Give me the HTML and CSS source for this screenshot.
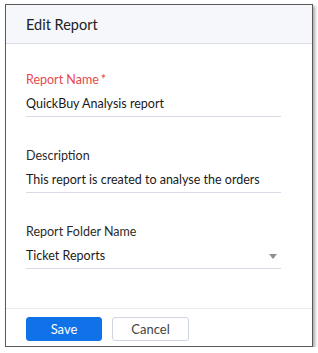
FILE: index.html
```html
<!DOCTYPE html>
<html lang="en">
<head>
    <meta charset="UTF-8">
    <meta name="viewport" content="width=device-width, initial-scale=1.0">
    <title>Edit Report</title>
    <link rel="stylesheet" href="styles.css">
</head>
<body>

<div class="dialog">
    <div class="dialog-header">
        <h3 class="dialog-title">Edit Report</h3>
    </div>

    <div class="dialog-body">
        <div class="field">
            <label class="field-label required">Report Name<span class="star">*</span></label>
            <div class="field-value">QuickBuy Analysis report</div>
        </div>

        <div class="field">
            <label class="field-label">Description</label>
            <div class="field-value">This report is created to analyse the orders</div>
        </div>

        <div class="field">
            <label class="field-label">Report Folder Name</label>
            <div class="field-value select">
                <span>Ticket Reports</span>
                <svg class="caret" width="8" height="5" viewBox="0 0 8 5"><path d="M0 0h8L4 5z" fill="#8a8f99"/></svg>
            </div>
        </div>
    </div>

    <div class="dialog-footer">
        <button class="btn btn-primary">Save</button>
        <button class="btn btn-secondary">Cancel</button>
    </div>
</div>

</body>
</html>
```

FILE: styles.css
```css
body {
    margin: 0;
    font-family: 'Lato', 'Noto Sans', sans-serif;
    background-color: #fff;
    color: #1f1f1f;
}

.dialog {
    width: 308px;
    height: 343px;
    margin: 4px 0 0 5px;
    box-sizing: border-box;
    border: 1px solid #5a5a5a;
    background-color: #fff;
    box-shadow: 2px 2px 3px rgba(0, 0, 0, 0.35);
    display: flex;
    flex-direction: column;
}

.dialog-header {
    height: 38px;
    flex-shrink: 0;
    background-color: #f5f7fb;
    border-bottom: 1px solid #d9dee8;
    display: flex;
    align-items: center;
    padding-left: 20px;
}

.dialog-title {
    margin: 0;
    font-size: 14.5px;
    font-weight: normal;
    color: #222;
}

.dialog-body {
    flex: 1;
    min-height: 0;
    padding: 27px 0 0 20px;
}

.field {
    width: 255px;
    margin-bottom: 30px;
}

.field-label {
    display: block;
    font-size: 12.5px;
    color: #2b2b2b;
    line-height: 18px;
}

.required {
    color: #e8484b;
}

.star {
    margin-left: 2px;
}

.field-value {
    font-size: 12.5px;
    color: #1a1a1a;
    line-height: 18px;
    padding: 6px 0 3px;
    border-bottom: 1px solid #d6dbe6;
}

.select {
    display: flex;
    justify-content: space-between;
    align-items: center;
}

.caret {
    margin-right: 4px;
}

.dialog-footer {
    box-sizing: border-box;
    flex-shrink: 0;
    height: 38px;
    border-top: 1px solid #e6e9ef;
    padding: 8px 20px 0;
    display: flex;
    gap: 10px;
}

.btn {
    width: 76px;
    height: 24px;
    border-radius: 3px;
    font-family: 'Lato', 'Noto Sans', sans-serif;
    font-size: 13px;
    cursor: pointer;
}

.btn-primary {
    background-color: #1072e8;
    border: 1px solid #1072e8;
    color: #fff;
}

.btn-secondary {
    width: 77px;
    background-color: #fff;
    border: 1px solid #cfd6e2;
    color: #444;
}
```
